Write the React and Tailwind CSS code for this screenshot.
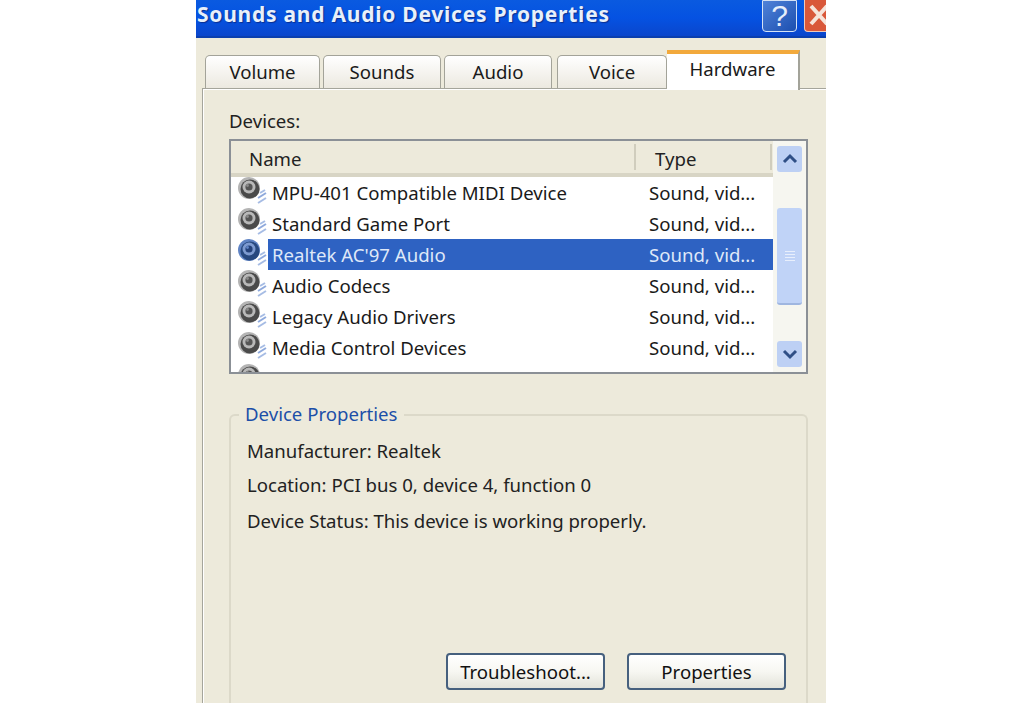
import React from 'react';

const devices = [
    'MPU-401 Compatible MIDI Device',
    'Standard Game Port',
    "Realtek AC'97 Audio",
    'Audio Codecs',
    'Legacy Audio Drivers',
    'Media Control Devices',
];

const tabs = [
    { label: 'Volume', width: 'w-[118px]', gap: 'pr-[3px]' },
    { label: 'Sounds', width: 'w-[121px]', gap: 'pr-[3px]' },
    { label: 'Audio', width: 'w-[113px]', gap: 'pr-[5px]' },
    { label: 'Voice', width: 'w-[110px]', gap: 'pr-0' },
];

const SpeakerIcon = ({ selected }) => (
    <svg width="32" height="30" viewBox="0 0 32 30" className="shrink-0">
        <circle cx="13" cy="12" r="11" fill={selected ? '#5f83c4' : '#b4b4b4'} />
        <circle cx="14" cy="13" r="9.5" fill={selected ? '#27487f' : '#4a4a4a'} />
        <circle cx="13" cy="11" r="6.5" fill={selected ? '#7d9ad0' : '#b8b8b8'} />
        <circle cx="13" cy="11" r="3.6" fill={selected ? '#24417a' : '#555555'} />
        <circle cx="11.5" cy="9.5" r="1.4" fill={selected ? '#5f83c4' : '#8a8a8a'} />
        <path d="M24 17 L29 14" fill="none" stroke="#a6bce4" strokeWidth="2" />
        <path d="M22 22 L30 17" fill="none" stroke="#8ea9dc" strokeWidth="2" />
        <path d="M22 27 L30 22" fill="none" stroke="#a6bce4" strokeWidth="2" />
    </svg>
);

const Chevron = ({ up }) => (
    <svg width="16" height="12" viewBox="0 0 16 12">
        <path d={up ? 'M2 9 L8 3 L14 9' : 'M2 3 L8 9 L14 3'} fill="none" stroke="#2f4f86" strokeWidth="3" />
    </svg>
);

const XpButton = ({ children }) => (
    <button className="w-[159px] h-[37px] rounded-[4px] border-2 border-[#46607e] bg-gradient-to-b from-white via-[#f7f7f2] to-[#e3e3da] text-[18.6px] text-[#111]">
        {children}
    </button>
);

const App = () => {
    return (
        <div className="w-full h-[703px] bg-white overflow-hidden font-['Noto_Sans',sans-serif]">
            <div className="ml-[196px] w-[630px] h-[703px] bg-[#edeadb] flex flex-col">
                {/* Title bar */}
                <div className="h-[38px] shrink-0 bg-gradient-to-b from-[#0a5ae0] via-[#0552e2] to-[#0a46cc] border-b-2 border-[#0b3fae] flex justify-between overflow-hidden">
                    <span className="pl-px font-bold text-[21px] tracking-[0.75px] leading-[28px] text-[#e8f0fa] [text-shadow:1px_1px_1px_#0a2f90] whitespace-nowrap">
                        Sounds and Audio Devices Properties
                    </span>
                    <div className="flex items-start gap-[7px]">
                        <div className="w-[35px] h-[32px] bg-gradient-to-br from-[#4f82d8] to-[#1c4fb0] border border-[#d5e2f5] rounded-b-[4px] text-[#e6eefa] text-[30px] leading-[30px] text-center font-['Liberation_Sans',sans-serif]">
                            ?
                        </div>
                        <div className="w-[22px] h-[32px] bg-[#d9583a] border-l border-b border-[#f0c8b8] rounded-bl-[4px] overflow-hidden">
                            <svg width="22" height="30" viewBox="0 0 22 30">
                                <path d="M6 6 L22 24 M22 6 L6 24" stroke="#f6e4da" strokeWidth="4" />
                            </svg>
                        </div>
                    </div>
                </div>

                {/* Tabs */}
                <div className="h-[50px] shrink-0 pl-[9px] flex items-end relative z-10">
                    {tabs.map((tab) => (
                        <div key={tab.label} className={`${tab.width} ${tab.gap} h-[33px] shrink-0`}>
                            <div className="h-full border border-b-0 border-[#a3a399] rounded-t-[5px] bg-gradient-to-b from-white to-[#ece9e0] text-[18.6px] leading-[32px] text-center text-[#1a1a1a]">
                                {tab.label}
                            </div>
                        </div>
                    ))}
                    <div className="w-[133px] h-[40px] -mb-[2px] shrink-0 bg-white border-t-[4px] border-t-[#f2a93c] border-r-2 border-r-[#a3a399] text-[18.6px] leading-[29px] text-center text-[#1a1a1a]">
                        Hardware
                    </div>
                </div>

                {/* Tab panel */}
                <div className="flex-1 ml-[6px] border-l border-t border-[#a5a59b] shadow-[inset_1px_1px_0_#ffffff] pl-[26px] pr-[18px] flex flex-col">
                    <div className="text-[18.6px] leading-[26px] mt-[19px] text-[#222]">Devices:</div>

                    {/* List view */}
                    <div className="mt-[5px] h-[235px] border-2 border-[#8b9096] bg-white flex shrink-0">
                        <div className="w-[542px] overflow-hidden">
                            <div className="h-[36px] flex bg-[#edeadb] border-b-4 border-[#d8d5c5] text-[18.6px] text-[#222]">
                                <div className="w-[405px] pl-[18px] border-r-2 border-[#d0cdbd] my-[3px] leading-[30px]">Name</div>
                                <div className="w-[136px] pl-[19px] border-r-2 border-[#d0cdbd] my-[3px] leading-[30px]">Type</div>
                            </div>
                            {devices.map((name, i) => (
                                <div key={name} className="h-[31px] flex items-center pl-[6px] text-[18.6px]">
                                    <div className="-ml-[1px] -mt-[3px] w-[32px]">
                                        <SpeakerIcon selected={i === 2} />
                                    </div>
                                    <div className={`flex-1 h-[31px] flex items-center whitespace-nowrap ${i === 2 ? 'bg-[#2e62c2] text-[#dfe8f8]' : 'text-[#1a1a1a]'}`}>
                                        <span className="w-[381px] pl-[4px]">{name}</span>
                                        <span>Sound, vid...</span>
                                    </div>
                                </div>
                            ))}
                            {/* next row, cut off by the list edge */}
                            <div className="h-[31px] pl-[5px]">
                                <SpeakerIcon />
                            </div>
                        </div>

                        {/* Scrollbar */}
                        <div className="flex-1 bg-[#f6f6f0] flex flex-col items-center pt-[5px] pb-[5px] px-[2px]">
                            <div className="w-[25px] h-[26px] rounded-[3px] bg-[#bdd0f4] flex items-center justify-center">
                                <Chevron up />
                            </div>
                            <div className="w-[25px] h-[97px] mt-[36px] rounded-[3px] bg-[#c0d3f7] border-b-2 border-[#9fb6e0] flex flex-col items-center justify-center gap-[2px]">
                                <div className="w-[10px] h-px bg-[#e8effc]" />
                                <div className="w-[10px] h-px bg-[#e8effc]" />
                                <div className="w-[10px] h-px bg-[#e8effc]" />
                                <div className="w-[10px] h-px bg-[#e8effc]" />
                            </div>
                            <div className="flex-1" />
                            <div className="w-[25px] h-[26px] rounded-[3px] bg-[#bdd0f4] flex items-center justify-center">
                                <Chevron />
                            </div>
                        </div>
                    </div>

                    {/* Group box */}
                    <div className="relative mt-[40px] flex-1 border-2 border-b-0 border-[#dcd9c9] rounded-t-[6px] px-[16px] flex flex-col text-[18.6px] text-[#222]">
                        <span className="absolute -top-[15px] left-[8px] px-[6px] bg-[#edeadb] text-[#1c4fa8] leading-[26px]">
                            Device Properties
                        </span>
                        <div className="mt-[21px] leading-[28px]">Manufacturer: Realtek</div>
                        <div className="mt-[6px] leading-[28px]">Location: PCI bus 0, device 4, function 0</div>
                        <div className="mt-[8px] leading-[28px]">Device Status: This device is working properly.</div>
                        <div className="mt-[118px] pl-[199px] flex gap-[22px]">
                            <XpButton>Troubleshoot...</XpButton>
                            <XpButton>Properties</XpButton>
                        </div>
                    </div>
                </div>
            </div>
        </div>
    );
};

export default App;
